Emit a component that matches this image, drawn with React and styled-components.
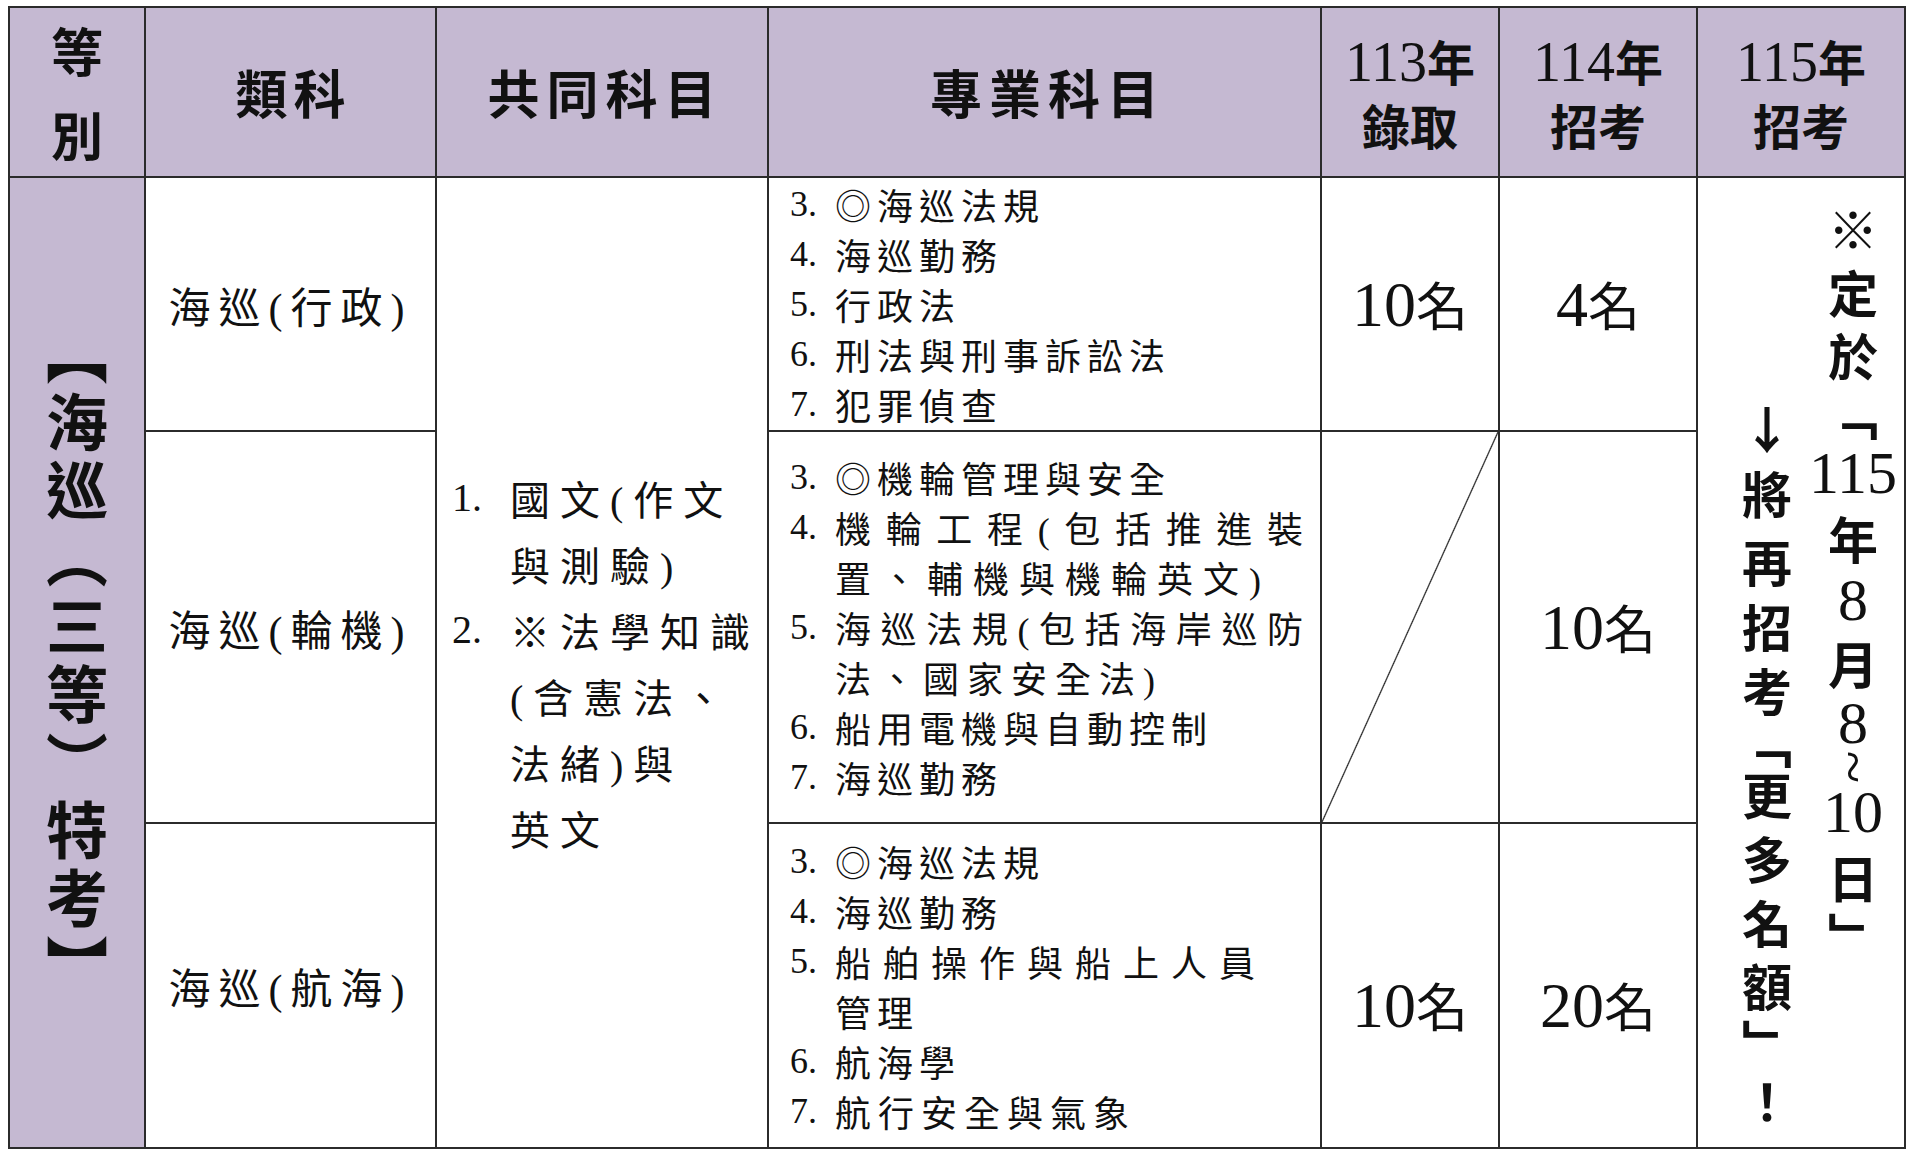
import React from "react";
import styled, { createGlobalStyle } from "styled-components";

const GlobalStyle = createGlobalStyle`
  html, body {
    margin: 0;
    padding: 0;
    background: #fff;
  }
  body {
    font-family: "Liberation Serif", "Noto Sans CJK TC", serif;
    color: #111;
  }
`;

const LAVENDER = "#c5b9d2";
const LINE = "#2b2b2b";

const Table = styled.div`
  display: grid;
  grid-template-columns: 134px 289px 330px 551px 176px 196px 1fr;
  grid-template-rows: 168px 252px 390px 1fr;
  gap: 2px;
  box-sizing: border-box;
  width: 1898px;
  height: 1143px;
  margin: 6px 0 0 8px;
  padding: 2px;
  background: ${LINE};
`;

const Cell = styled.div`
  display: flex;
  align-items: center;
  justify-content: ${p => p.$justify || "center"};
  box-sizing: border-box;
  min-width: 0;
  background: ${p => (p.$head ? LAVENDER : "#fff")};
  padding: ${p => p.$pad || "0"};
  ${p => p.$rows && `grid-row: span ${p.$rows};`}
`;

const SlashCell = styled(Cell)`
  background: linear-gradient(
    to top left,
    #fff calc(50% - 1.2px),
    #222 50%,
    #fff calc(50% + 1.2px)
  );
`;

const HeadLabel = styled.div`
  font-family: "Noto Sans CJK TC", sans-serif;
  font-weight: 700;
  font-size: ${p => p.$size || 50}px;
  line-height: ${p => (p.$lh ? `${p.$lh}px` : 1.2)};
  letter-spacing: ${p => p.$track || 0}px;
  padding-left: ${p => p.$track || 0}px;
  text-align: center;
  white-space: nowrap;
`;

const Digits = styled.span`
  font-family: "Liberation Serif", serif;
  font-weight: 400;
  font-size: ${p => p.$size}px;
  letter-spacing: 0;
`;

const ClassName = styled.div`
  font-family: "Liberation Serif", "Noto Sans CJK TC", serif;
  font-size: 42px;
  letter-spacing: 8px;
  white-space: nowrap;
`;

const LineList = styled.div`
  display: flex;
  flex-direction: column;
  width: 100%;
`;

const Line = styled.div`
  display: flex;
  align-items: center;
  height: ${p => p.$lh}px;
  font-size: ${p => p.$size}px;
  letter-spacing: ${p => p.$track}px;
  padding-left: ${p => p.$indent || 0}px;
  white-space: nowrap;
`;

const Mark = styled.span`
  flex: 0 0 ${p => p.$w}px;
  letter-spacing: 0;
`;

const Words = styled.span`
  flex: ${p => (p.$justify ? "1" : "0 0 auto")};
  ${p =>
    p.$justify &&
    `
    letter-spacing: 0;
    white-space: normal;
    text-align: justify;
    text-align-last: justify;
  `}
`;

const GradeBanner = styled.div`
  writing-mode: vertical-rl;
  font-family: "Noto Sans CJK TC", sans-serif;
  font-weight: 700;
  font-size: 62px;
  letter-spacing: 6px;
  line-height: 1;
`;

const Count = styled.div`
  font-family: "Noto Sans CJK TC", sans-serif;
  font-size: 52px;
  white-space: nowrap;
`;

const NoticeCell = styled(Cell)`
  align-items: flex-start;
  gap: 22px;
  padding-left: 18px;
`;

const NoticeColumn = styled.div`
  display: flex;
  flex-direction: column;
  align-items: center;
  width: 64px;
  padding-top: ${p => p.$top}px;
`;

const Glyph = styled.span`
  display: flex;
  align-items: center;
  justify-content: center;
  height: ${p => p.$h || 64}px;
  font-family: ${p => (p.$serif ? '"Liberation Serif", serif' : '"Noto Sans CJK TC", sans-serif')};
  font-size: ${p => (p.$serif ? 60 : 50)}px;
  font-weight: ${p => (p.$serif ? 400 : 700)};
  line-height: 1;
  white-space: nowrap;
  ${p => p.$turn && "transform: rotate(90deg);"}
`;

const common = [
  { n: "1.", t: "國文(作文" },
  { t: "與測驗)" },
  { n: "2.", t: "※法學知識" },
  { t: "(含憲法、" },
  { t: "法緒)與" },
  { t: "英文" },
];

const majors = [
  [
    { n: "3.", t: "◎海巡法規" },
    { n: "4.", t: "海巡勤務" },
    { n: "5.", t: "行政法" },
    { n: "6.", t: "刑法與刑事訴訟法" },
    { n: "7.", t: "犯罪偵查" },
  ],
  [
    { n: "3.", t: "◎機輪管理與安全" },
    { n: "4.", t: "機輪工程(包括推進裝", justify: true },
    { t: "置、輔機與機輪英文)", track: 10 },
    { n: "5.", t: "海巡法規(包括海岸巡防", justify: true },
    { t: "法、國家安全法)", track: 8 },
    { n: "6.", t: "船用電機與自動控制" },
    { n: "7.", t: "海巡勤務" },
  ],
  [
    { n: "3.", t: "◎海巡法規" },
    { n: "4.", t: "海巡勤務" },
    { n: "5.", t: "船舶操作與船上人員", track: 12 },
    { t: "管理" },
    { n: "6.", t: "航海學" },
    { n: "7.", t: "航行安全與氣象", track: 7 },
  ],
];

const classes = ["海巡(行政)", "海巡(輪機)", "海巡(航海)"];

const noticeRight = [
  { c: "※" },
  { c: "定" },
  { c: "於", h: 62 },
  { c: "﹁", h: 56 },
  { c: "115", serif: true },
  { c: "年" },
  { c: "8", serif: true, h: 62 },
  { c: "月", h: 62 },
  { c: "8", serif: true, h: 60 },
  { c: "~", serif: true, h: 28, turn: true },
  { c: "10", serif: true, h: 62 },
  { c: "日", h: 66 },
  { c: "﹂", h: 50 },
];

const noticeLeft = [
  { c: "↓", h: 60 },
  { c: "將", h: 70 },
  { c: "再", h: 66 },
  { c: "招" },
  { c: "考" },
  { c: "﹁", h: 40 },
  { c: "更" },
  { c: "多" },
  { c: "名" },
  { c: "額", h: 62 },
  { c: "﹂", h: 52 },
  { c: "！" },
];

const TextBlock = ({ items, size, lh, track, mark }) => (
  <LineList>
    {items.map((it, i) => (
      <Line key={i} $lh={lh} $size={size} $track={it.track ?? track} $indent={it.n ? 0 : mark}>
        {it.n && <Mark $w={mark}>{it.n}</Mark>}
        <Words $justify={it.justify}>{it.t}</Words>
      </Line>
    ))}
  </LineList>
);

const Notice = ({ glyphs, top }) => (
  <NoticeColumn $top={top}>
    {glyphs.map((g, i) => (
      <Glyph key={i} $h={g.h} $serif={g.serif} $turn={g.turn}>
        {g.c}
      </Glyph>
    ))}
  </NoticeColumn>
);

const Quota = ({ n }) => (
  <Count>
    <Digits $size={64}>{n}</Digits>名
  </Count>
);

export default function App() {
  return (
    <>
      <GlobalStyle />
      <Table>
        <Cell $head>
          <HeadLabel $size={52} $lh={84}>
            等<br />別
          </HeadLabel>
        </Cell>
        <Cell $head>
          <HeadLabel $size={52} $track={6}>類科</HeadLabel>
        </Cell>
        <Cell $head>
          <HeadLabel $size={52} $track={7}>共同科目</HeadLabel>
        </Cell>
        <Cell $head>
          <HeadLabel $size={52} $track={7}>專業科目</HeadLabel>
        </Cell>
        <Cell $head>
          <HeadLabel $size={48} $lh={62}>
            <Digits $size={56}>113</Digits>年<br />錄取
          </HeadLabel>
        </Cell>
        <Cell $head>
          <HeadLabel $size={48} $lh={62}>
            <Digits $size={56}>114</Digits>年<br />招考
          </HeadLabel>
        </Cell>
        <Cell $head>
          <HeadLabel $size={48} $lh={62}>
            <Digits $size={56}>115</Digits>年<br />招考
          </HeadLabel>
        </Cell>

        <Cell $head $rows={3}>
          <GradeBanner>【海巡（三等）特考】</GradeBanner>
        </Cell>
        <Cell>
          <ClassName>{classes[0]}</ClassName>
        </Cell>
        <Cell $rows={3} $justify="flex-start" $pad="0 0 0 15px">
          <TextBlock items={common} size={40} lh={66} track={10} mark={58} />
        </Cell>
        <Cell $justify="flex-start" $pad="0 17px 0 21px">
          <TextBlock items={majors[0]} size={36} lh={50} track={6} mark={45} />
        </Cell>
        <Cell>
          <Quota n="10" />
        </Cell>
        <Cell>
          <Quota n="4" />
        </Cell>
        <NoticeCell $rows={3}>
          <Notice glyphs={noticeLeft} top={219} />
          <Notice glyphs={noticeRight} top={17} />
        </NoticeCell>

        <Cell>
          <ClassName>{classes[1]}</ClassName>
        </Cell>
        <Cell $justify="flex-start" $pad="0 17px 0 21px">
          <TextBlock items={majors[1]} size={36} lh={50} track={6} mark={45} />
        </Cell>
        <SlashCell />
        <Cell>
          <Quota n="10" />
        </Cell>

        <Cell>
          <ClassName>{classes[2]}</ClassName>
        </Cell>
        <Cell $justify="flex-start" $pad="0 17px 0 21px">
          <TextBlock items={majors[2]} size={36} lh={50} track={6} mark={45} />
        </Cell>
        <Cell $pad="38px 0 0 0">
          <Quota n="10" />
        </Cell>
        <Cell $pad="38px 0 0 0">
          <Quota n="20" />
        </Cell>
      </Table>
    </>
  );
}
